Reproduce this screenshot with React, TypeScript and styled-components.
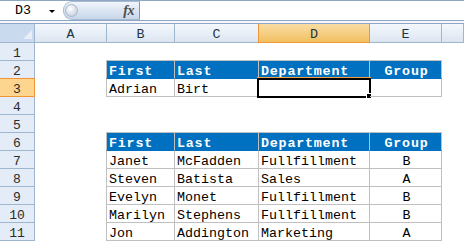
import React from "react";
import styled, { createGlobalStyle, css } from "styled-components";

const Global = createGlobalStyle`
  html, body { margin: 0; padding: 0; background: #ffffff; overflow: hidden; }
  * { box-sizing: border-box; }
`;

const MONO = `"Liberation Mono", "DejaVu Sans Mono", monospace`;
const GRID = "#c0c0c0";
const HEAD_LINE = "#9eb6ce";
const ORANGE = "#f29536";
const BLUE = "#0070c0";

const Sheet = styled.div`
  width: 464px;
  height: 241px;
  display: flex;
  flex-direction: column;
  font-family: ${MONO};
  font-size: 13.33px;
  color: #000;
  overflow: hidden;
`;

const FormulaBar = styled.div`
  height: 21px;
  display: flex;
  align-items: stretch;
  border-top: 1px solid #8fa7c5;
  border-bottom: 1px solid #8fa7c5;
  background: #ffffff;
`;

const NameBox = styled.div`
  width: 63px;
  display: flex;
  align-items: center;
  padding-left: 15px;
  gap: 0;
  position: relative;
`;

const NameText = styled.span`
  font-family: ${MONO};
  font-size: 13.33px;
  line-height: 19px;
  width: 34px;
  color: #000;
`;

const DropArrow = styled.span`
  width: 0;
  height: 0;
  border-left: 3px solid transparent;
  border-right: 3px solid transparent;
  border-top: 3px solid #000;
  margin-top: 1px;
`;

const FxPill = styled.div`
  width: 77px;
  margin: 0 0 0 0;
  display: flex;
  align-items: center;
  justify-content: space-between;
  padding: 0 5px 0 1px;
  border-radius: 9px 0 0 9px;
  border: 1px solid #a9bbd3;
  border-right: 1px solid #7f97b6;
  background: linear-gradient(to bottom, #f1f5fb 0%, #dde7f3 45%, #c8d7ea 100%);
`;

const Knob = styled.span`
  width: 13px;
  height: 13px;
  border-radius: 50%;
  background: radial-gradient(circle at 40% 35%, #ffffff 0%, #e6ebf1 35%, #b9c4d2 100%);
  border: 1px solid #aab6c6;
`;

const Fx = styled.span`
  font-family: "Liberation Serif", "DejaVu Serif", serif;
  font-style: italic;
  font-weight: bold;
  font-size: 14px;
  color: #4d4d4d;
  letter-spacing: -0.5px;
  line-height: 17px;
`;

const FormulaInput = styled.div`
  flex: 1;
  background: #ffffff;
`;

const BarGap = styled.div`
  height: 2px;
  background: #f4f7fb;
`;

const ColHeaderRow = styled.div`
  display: flex;
  height: 20px;
  border-top: 1px solid #8fa7c5;
`;

const Corner = styled.div`
  width: 35px;
  height: 19px;
  border-right: 1px solid ${HEAD_LINE};
  border-bottom: 1px solid ${HEAD_LINE};
  background: #c9d9ee;
  display: flex;
  align-items: flex-end;
  justify-content: flex-end;
  padding: 0 2px 3px 0;
`;

const CornerTri = styled.span`
  width: 0;
  height: 0;
  border-left: 9px solid transparent;
  border-bottom: 9px solid #e9eff7;
`;

const ColHeader = styled.div<{ $w?: number; $sel?: boolean }>`
  ${(p) => (p.$w ? css`width: ${p.$w}px;` : css`flex: 1;`)}
  height: 19px;
  border-right: 1px solid ${HEAD_LINE};
  border-bottom: 1px solid ${HEAD_LINE};
  background: linear-gradient(to bottom, #f4f7fb 0%, #e6edf6 60%, #dbe4f0 100%);
  text-align: center;
  font-family: ${MONO};
  font-size: 13.33px;
  line-height: 14px;
  padding-top: 4px;
  color: #1f3547;
  ${(p) =>
    p.$sel &&
    css`
      background: linear-gradient(to bottom, #f9dca4 0%, #f5cd80 55%, #f1c060 100%);
      border-right-color: ${ORANGE};
      border-bottom-color: ${ORANGE};
      box-shadow: -1px 0 0 ${ORANGE};
    `}
`;

const Row = styled.div`
  display: flex;
  height: 18px;
`;

const RowHeader = styled.div<{ $sel?: boolean }>`
  width: 35px;
  height: 18px;
  border-right: 1px solid ${HEAD_LINE};
  border-bottom: 1px solid ${HEAD_LINE};
  background: #e4ecf7;
  text-align: center;
  font-family: ${MONO};
  font-size: 13px;
  line-height: 13px;
  padding-top: 4px;
  color: #2b2b2b;
  ${(p) =>
    p.$sel &&
    css`
      background: #fdd58e;
      border-right-color: ${ORANGE};
      border-bottom-color: ${ORANGE};
      box-shadow: 0 -1px 0 ${ORANGE};
    `}
`;

const Spacer = styled.div<{ $w: number }>`
  width: ${(p) => p.$w}px;
  height: 18px;
`;

type Kind = "none" | "top" | "head" | "data";

const Cell = styled.div<{ $w: number; $kind: Kind; $first?: boolean; $center?: boolean }>`
  position: relative;
  width: ${(p) => p.$w}px;
  height: 18px;
  font-family: ${MONO};
  font-size: 13.33px;
  line-height: 13px;
  padding: 4px 0 0 2px;
  white-space: nowrap;
  text-align: ${(p) => (p.$center ? "center" : "left")};
  ${(p) =>
    p.$kind === "top" &&
    css`
      border-bottom: 1px solid ${GRID};
    `}
  ${(p) =>
    p.$kind === "head" &&
    css`
      background: ${BLUE};
      color: #ffffff;
      font-weight: bold;
      letter-spacing: 0.8px;
      border-right: 1px solid ${GRID};
      border-bottom: 1px solid ${BLUE};
      ${p.$first && css`border-left: 1px solid ${GRID};`}
    `}
  ${(p) =>
    p.$kind === "data" &&
    css`
      color: #000;
      border-right: 1px solid ${GRID};
      border-bottom: 1px solid ${GRID};
      ${p.$first && css`border-left: 1px solid ${GRID};`}
    `}
`;

const Selection = styled.div`
  position: absolute;
  left: -2px;
  top: -1px;
  width: 114px;
  height: 20px;
  border: 2px solid #000;
  box-shadow: 0 -1px 0 #f4a040, inset 0 0 0 1px #ffffff;
  pointer-events: none;
`;

const FillHandle = styled.div`
  position: absolute;
  right: -3px;
  bottom: -3px;
  width: 6px;
  height: 6px;
  background: #000;
  border: 1px solid #ffffff;
`;

const COL_HEADERS: { label: string; w?: number }[] = [
  { label: "A", w: 72 },
  { label: "B", w: 68 },
  { label: "C", w: 84 },
  { label: "D", w: 111 },
  { label: "E", w: 72 },
  { label: "" },
];

const CELL_W = [69, 84, 111, 72];

type RowSpec = { kind: Kind; values?: string[] };

const ROWS: RowSpec[] = [
  { kind: "top" },
  { kind: "head", values: ["First", "Last", "Department", "Group"] },
  { kind: "data", values: ["Adrian", "Birt", "", ""] },
  { kind: "none" },
  { kind: "top" },
  { kind: "head", values: ["First", "Last", "Department", "Group"] },
  { kind: "data", values: ["Janet", "McFadden", "Fullfillment", "B"] },
  { kind: "data", values: ["Steven", "Batista", "Sales", "A"] },
  { kind: "data", values: ["Evelyn", "Monet", "Fullfillment", "B"] },
  { kind: "data", values: ["Marilyn", "Stephens", "Fullfillment", "B"] },
  { kind: "data", values: ["Jon", "Addington", "Marketing", "A"] },
];

export default function App() {
  return (
    <>
      <Global />
      <Sheet>
        <FormulaBar>
          <NameBox>
            <NameText>D3</NameText>
            <DropArrow />
          </NameBox>
          <FxPill>
            <Knob />
            <Fx>fx</Fx>
          </FxPill>
          <FormulaInput />
        </FormulaBar>
        <BarGap />
        <ColHeaderRow>
          <Corner>
            <CornerTri />
          </Corner>
          {COL_HEADERS.map((c, i) => (
            <ColHeader key={i} $w={c.w} $sel={c.label === "D"}>
              {c.label}
            </ColHeader>
          ))}
        </ColHeaderRow>
        {ROWS.map((r, ri) => {
          const rowNum = ri + 1;
          return (
            <Row key={ri}>
              <RowHeader $sel={rowNum === 3}>{rowNum}</RowHeader>
              <Spacer $w={71} />
              {r.kind !== "none" &&
                CELL_W.map((w, ci) => (
                  <Cell key={ci} $w={w} $kind={r.kind} $first={ci === 0} $center={ci === 3}>
                    {r.values ? r.values[ci] : ""}
                    {rowNum === 3 && ci === 2 && (
                      <Selection>
                        <FillHandle />
                      </Selection>
                    )}
                  </Cell>
                ))}
            </Row>
          );
        })}
      </Sheet>
    </>
  );
}
